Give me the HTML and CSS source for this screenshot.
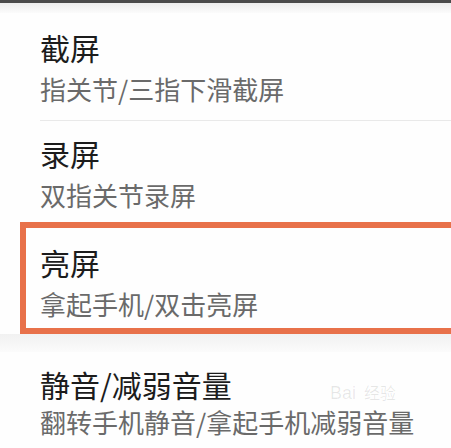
FILE: index.html
```html
<!DOCTYPE html>
<html lang="zh-CN">
<head>
<meta charset="utf-8">
<link rel="stylesheet" href="styles.css">
</head>
<body>
<div class="screen">
  <div class="topbar"></div>
  <div class="topshade"></div>
  <div class="item first">
    <div class="title">截屏</div>
    <div class="sub">指关节/三指下滑截屏</div>
  </div>
  <div class="item second">
    <div class="title">录屏</div>
    <div class="sub">双指关节录屏</div>
  </div>
  <div class="item boxed">
    <div class="title">亮屏</div>
    <div class="sub">拿起手机/双击亮屏</div>
  </div>
  <div class="band"></div>
  <div class="item last">
    <div class="title">静音/减弱音量</div>
    <div class="sub">翻转手机静音/拿起手机减弱音量</div>
  </div>
  <div class="watermark">Bai<span class="wm-cn">经验</span></div>
</div>
</body>
</html>
```
FILE: styles.css
```css
html, body {
  margin: 0;
  padding: 0;
  background: #fefefe;
  overflow: hidden;
}
.screen {
  position: relative;
  height: 448px;
  overflow: hidden;
  font-family: "Noto Sans CJK SC", "Noto Sans", sans-serif;
  background: #fefefe;
}
.topbar {
  height: 3px;
  background: #4a4a4a;
}
.topshade {
  height: 10px;
  background: linear-gradient(#ececec, #fbfbfb);
}
.item {
  padding-left: 40px;
}
.title {
  font-size: 30px;
  line-height: 42px;
  color: #1c1c1c;
}
.sub {
  font-size: 26px;
  line-height: 42px;
  color: #6a6a6a;
}
.first {
  padding-top: 13px;
}
.first .sub {
  margin-bottom: 10px;
}
.first::after {
  content: "";
  display: block;
  height: 1px;
  background: #e9e9e9;
}
.second {
  padding-top: 11px;
  padding-bottom: 6px;
}
.boxed {
  margin-left: 20px;
  margin-right: -20px;
  padding-left: 14px;
  padding-top: 13px;
  padding-bottom: 3px;
  border-top: 6px solid #e8714a;
  border-bottom: 6px solid #e8714a;
  border-left: 6px solid #e8714a;
  background: #fefefe;
}
.band {
  height: 18px;
  background: linear-gradient(#f1f1f1, #fbfbfb);
}
.last {
  padding-top: 13px;
}
.last .title,
.last .sub {
  line-height: 38px;
}
.watermark {
  position: absolute;
  left: 330px;
  top: 382px;
  font-family: "Liberation Sans", sans-serif;
  font-size: 18px;
  line-height: 20px;
  color: rgba(0, 0, 0, 0.09);
}
.wm-cn {
  font-family: "Noto Sans CJK SC", sans-serif;
  font-size: 16px;
  margin-left: 8px;
}
```
